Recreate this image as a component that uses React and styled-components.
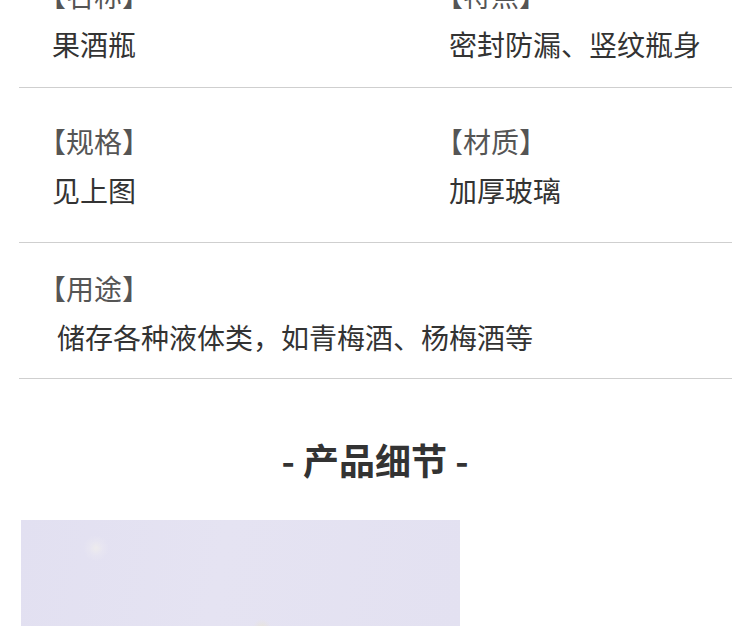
import React from 'react'
import styled, { createGlobalStyle } from 'styled-components'

const GlobalStyle = createGlobalStyle`
  html, body {
    margin: 0;
    padding: 0;
    background: #fff;
    overflow: hidden;
  }
  body {
    font-family: "Noto Sans CJK SC", "Noto Sans", sans-serif;
  }
`

const Page = styled.div`
  width: 750px;
  height: 626px;
  overflow: hidden;
  background: #fff;
`

const SpecTable = styled.div`
  margin: -58px 18px 0 19px;
`

const SpecRow = styled.div`
  display: grid;
  grid-template-columns: ${p => (p.single ? '1fr' : '397px 1fr')};
  padding: ${p => p.pad || '33px 0 32px 33px'};
  border-bottom: 1px solid #cfcfcf;
`

const SpecCell = styled.div`
  display: flex;
  flex-direction: column;
  gap: 9px;
`

const Label = styled.div`
  font-size: 28px;
  line-height: 40px;
  color: #555;
  margin-left: -14px;
`

const Value = styled.div`
  font-size: 28px;
  line-height: 40px;
  color: #333;
  margin-left: ${p => (p.shift ? '5px' : '0')};
`

const SectionTitle = styled.h2`
  margin: 55px 0 36px;
  text-align: center;
  font-size: 36px;
  line-height: 50px;
  font-weight: 700;
  color: #333;
`

const DetailPhoto = styled.div`
  margin-left: 21px;
  width: 439px;
  height: 120px;
  background:
    radial-gradient(circle at 75px 28px, rgba(240, 238, 236, 0.8) 0, rgba(236, 234, 242, 0.4) 7px, rgba(228, 226, 242, 0) 13px),
    radial-gradient(circle at 241px 108px, rgba(232, 228, 214, 0.8) 0, rgba(228, 226, 242, 0) 9px),
    linear-gradient(100deg, #e2e0f1 0%, #e5e3f2 45%, #e3e1f1 100%);
`

const specs = [
  {
    pad: '33px 0 23px 33px',
    items: [
      { label: '【名称】', value: '果酒瓶' },
      { label: '【特点】', value: '密封防漏、竖纹瓶身' },
    ],
  },
  {
    items: [
      { label: '【规格】', value: '见上图' },
      { label: '【材质】', value: '加厚玻璃' },
    ],
  },
]

const App = () => (
  <Page>
    <GlobalStyle />
    <SpecTable>
      {specs.map((row, i) => (
        <SpecRow key={i} pad={row.pad}>
          {row.items.map(item => (
            <SpecCell key={item.label}>
              <Label>{item.label}</Label>
              <Value>{item.value}</Value>
            </SpecCell>
          ))}
        </SpecRow>
      ))}
      <SpecRow single pad="25px 0 21px 33px">
        <SpecCell>
          <Label>【用途】</Label>
          <Value shift>储存各种液体类，如青梅酒、杨梅酒等</Value>
        </SpecCell>
      </SpecRow>
    </SpecTable>
    <SectionTitle>- 产品细节 -</SectionTitle>
    <DetailPhoto />
  </Page>
)

export default App
